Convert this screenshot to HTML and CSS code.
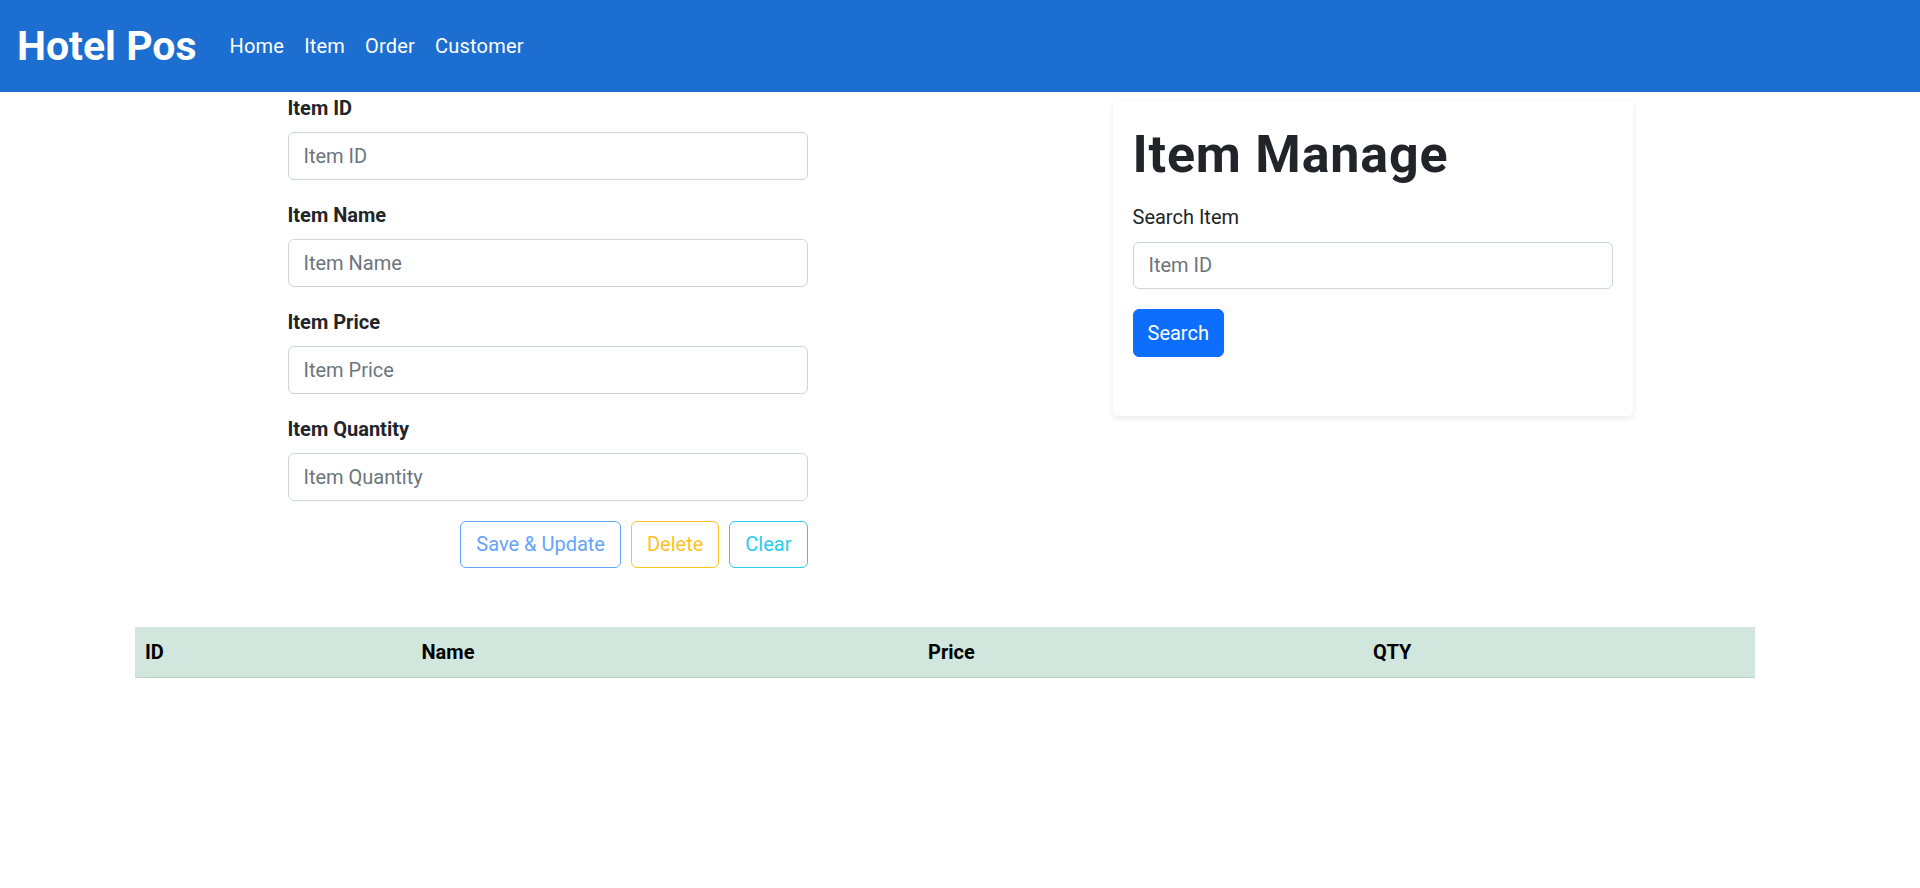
FILE: index.html
```html
<!DOCTYPE html>
<html lang="en">
<head>
<meta charset="utf-8">
<title>Hotel Pos - Item</title>
<link rel="stylesheet" href="styles.css">
</head>
<body>
<nav class="navbar">
  <a class="brand" href="#">Hotel Pos</a>
  <ul class="nav">
    <li><a class="nav-link" href="#">Home</a></li>
    <li><a class="nav-link" href="#">Item</a></li>
    <li><a class="nav-link" href="#">Order</a></li>
    <li><a class="nav-link" href="#">Customer</a></li>
  </ul>
</nav>
<main class="container">
  <div class="row">
    <form class="col-form">
      <div class="group">
        <label class="form-label" for="itemId">Item ID</label>
        <input class="form-control" id="itemId" type="text" placeholder="Item ID">
      </div>
      <div class="group">
        <label class="form-label" for="itemName">Item Name</label>
        <input class="form-control" id="itemName" type="text" placeholder="Item Name">
      </div>
      <div class="group">
        <label class="form-label" for="itemPrice">Item Price</label>
        <input class="form-control" id="itemPrice" type="text" placeholder="Item Price">
      </div>
      <div class="group">
        <label class="form-label" for="itemQty">Item Quantity</label>
        <input class="form-control" id="itemQty" type="text" placeholder="Item Quantity">
      </div>
      <div class="actions">
        <button type="button" class="btn btn-save">Save &amp; Update</button>
        <button type="button" class="btn btn-delete">Delete</button>
        <button type="button" class="btn btn-clear">Clear</button>
      </div>
    </form>
    <div class="col-card">
      <div class="card">
        <h1 class="card-title">Item Manage</h1>
        <label class="search-label" for="searchId">Search Item</label>
        <input class="form-control" id="searchId" type="text" placeholder="Item ID">
        <div class="search-actions">
          <button type="button" class="btn btn-primary">Search</button>
        </div>
      </div>
    </div>
  </div>
  <table class="item-table">
    <thead>
      <tr>
        <th class="c-id">ID</th>
        <th class="c-name">Name</th>
        <th class="c-price">Price</th>
        <th class="c-qty">QTY</th>
      </tr>
    </thead>
    <tbody></tbody>
  </table>
</main>
</body>
</html>
```

FILE: styles.css
```css
* { box-sizing: border-box; }

html, body {
  margin: 0;
  padding: 0;
  background: #fff;
}

body {
  font-family: Roboto, "Liberation Sans", Arial, sans-serif;
  font-size: 20px;
  line-height: 30px;
  color: #212529;
}

/* navbar */
.navbar {
  height: 92px;
  background: #1c6ed0;
  display: flex;
  align-items: center;
  padding: 0 15px;
}

.brand {
  color: #fff;
  text-decoration: none;
  font-weight: 700;
  font-size: 41px;
  line-height: 48px;
  margin-right: 23px;
  padding-left: 2px;
}

.nav {
  list-style: none;
  margin: 0;
  padding: 0;
  display: flex;
}

.nav-link {
  display: block;
  color: #fff;
  text-decoration: none;
  font-size: 20px;
  line-height: 30px;
  padding: 0 10px;
  letter-spacing: 0.2px;
}

/* layout */
.container {
  width: 1650px;
  margin: 0 auto;
}

.row {
  display: flex;
  align-items: flex-start;
}

.col-form {
  width: 550px;
  margin-left: 137.5px;
  padding: 0 15px;
  margin-top: 0.5px;
}

.col-card {
  width: 550px;
  margin-left: 275px;
  padding: 0 15px;
  margin-top: 9px;
}

.group {
  margin-bottom: 20px;
}

.form-label {
  display: block;
  font-weight: 700;
  margin-bottom: 9.5px;
}

.form-control {
  display: block;
  width: 100%;
  height: 47.5px;
  padding: 0 15px;
  font-family: inherit;
  font-size: 20px;
  line-height: 30px;
  color: #212529;
  background: #fff;
  border: 1px solid #ced4da;
  border-radius: 6px;
  outline: none;
}

.form-control::placeholder {
  color: #6c757d;
  opacity: 1;
}

.actions {
  display: flex;
  justify-content: flex-end;
  gap: 10px;
}

.btn {
  height: 47.5px;
  padding: 0 15px;
  font-family: inherit;
  font-size: 20px;
  line-height: 30px;
  background: #fff;
  border: 1px solid transparent;
  border-radius: 6px;
  cursor: pointer;
}

.btn-save {
  color: #66a3fb;
  border-color: #66a3fb;
}

.btn-delete {
  color: #ffc21f;
  border-color: #ffc21f;
}

.btn-clear {
  color: #27cdf1;
  border-color: #27cdf1;
}

.btn-primary {
  background: #0d6efd;
  border-color: #0d6efd;
  color: #fff;
  padding: 0 14px;
}

/* card */
.card {
  background: #fff;
  border-radius: 5px;
  box-shadow: 0 2px 6px rgba(0, 0, 0, 0.09);
  padding: 24px 20px 20px;
  height: 315px;
}

.card-title {
  margin: 0 0 17px;
  font-size: 52px;
  line-height: 60px;
  font-weight: 700;
  letter-spacing: 0.8px;
  color: #212529;
}

.search-label {
  display: block;
  margin-bottom: 9.5px;
}

.search-actions {
  margin-top: 20px;
}

/* table */
.item-table {
  width: 1620px;
  margin-top: 59px;
  border-collapse: collapse;
  table-layout: fixed;
}

.item-table th {
  background: #d1e7dd;
  color: #000;
  text-align: left;
  font-weight: 700;
  padding: 10px 10px 10px;
  line-height: 30px;
  border-bottom: 1px solid #bcd0c7;
}

.c-id { width: 276.5px; }
.c-name { width: 506.5px; }
.c-price { width: 445px; }
.c-qty { width: 392px; }
```
